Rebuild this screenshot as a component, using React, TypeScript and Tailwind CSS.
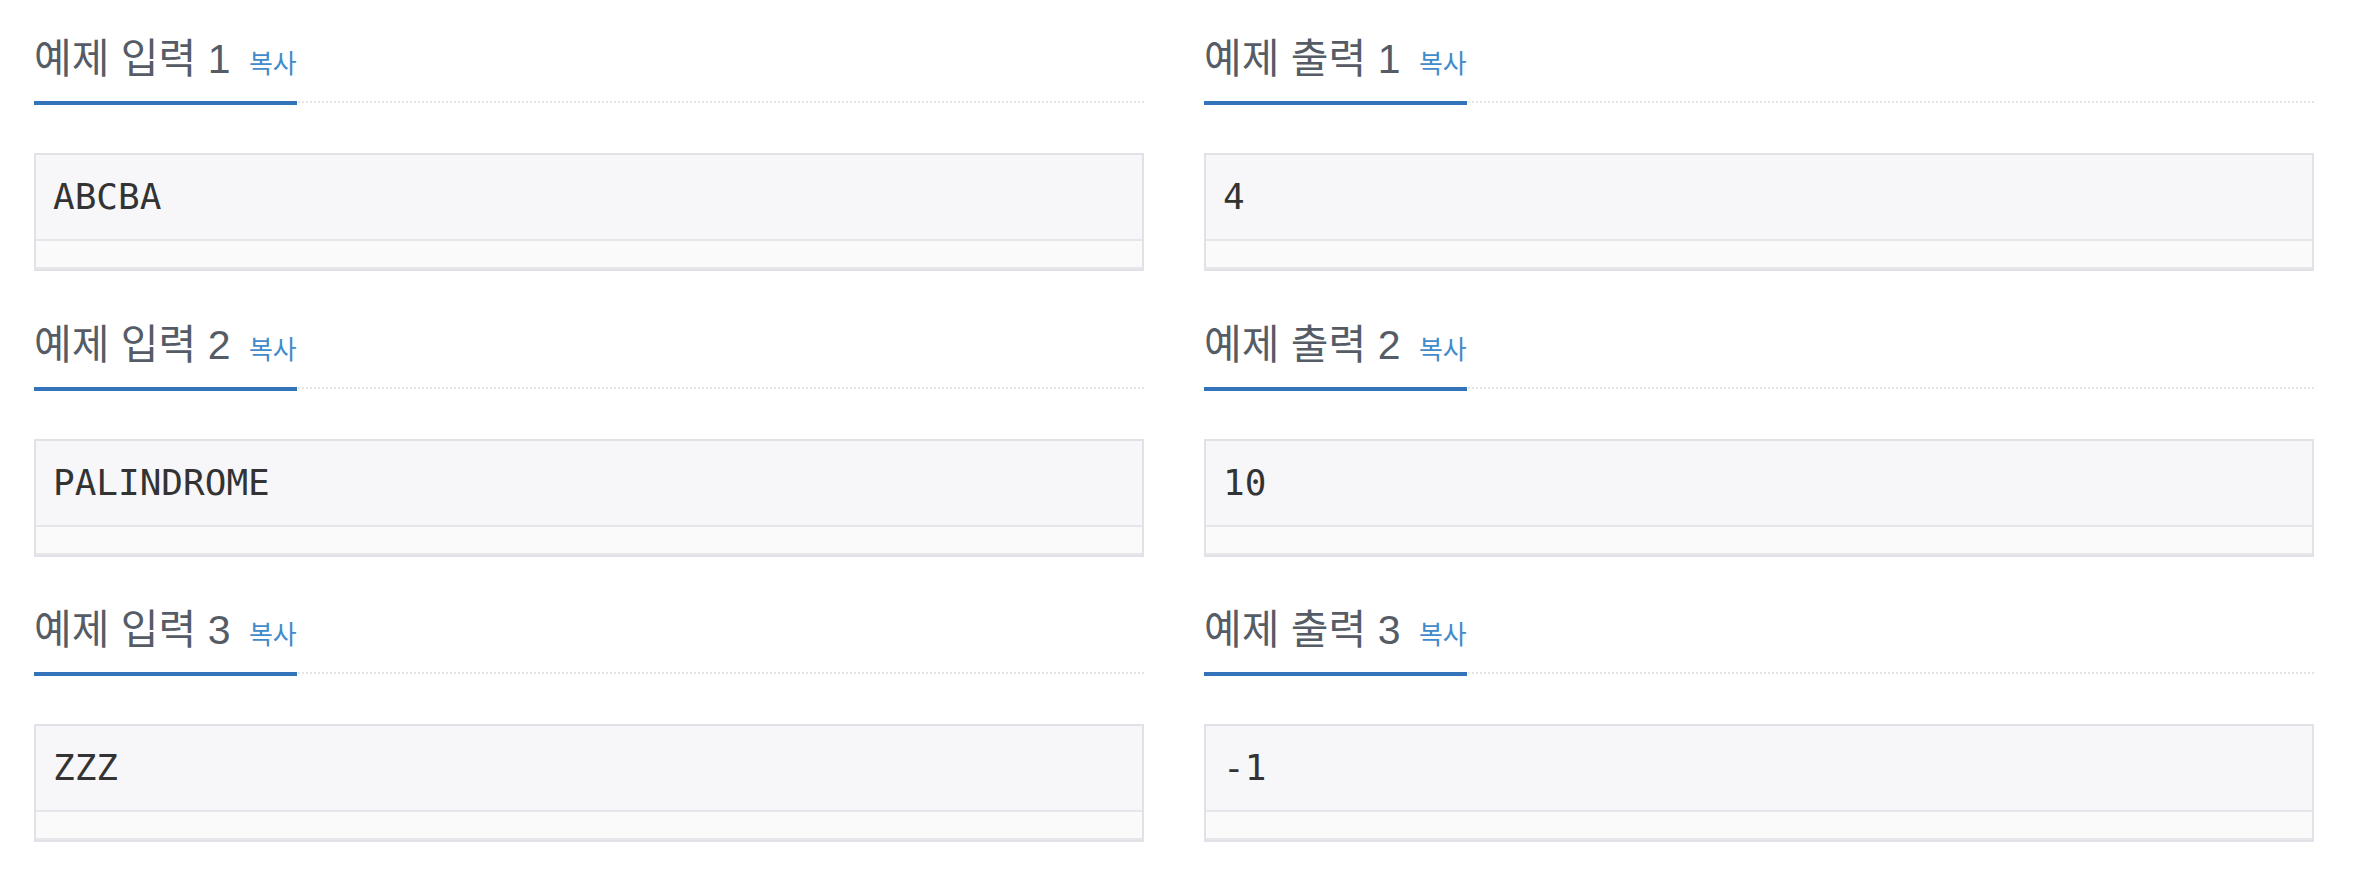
import React from "react"

const samples = [
  { n: 1, input: "ABCBA", output: "4" },
  { n: 2, input: "PALINDROME", output: "10" },
  { n: 3, input: "ZZZ", output: "-1" },
]

function SampleBlock({ title, value }: { title: string; value: string }) {
  return (
    <div>
      {/* headline */}
      <div className="border-b-2 border-dotted border-[#e4e4ea]">
        <h2 className="inline-block mb-[-4px] pb-[18px] border-b-4 border-[#3273b9] text-[41px] leading-[48px] font-normal text-[#555c66] [font-family:'Liberation_Sans','Noto_Sans_CJK_KR',sans-serif]">
          {title}{" "}
          <button type="button" className="ml-[7px] text-[26px] leading-none text-[#428bca] [font-family:'Noto_Sans_CJK_KR',sans-serif]">
            복사
          </button>
        </h2>
      </div>

      {/* sample data */}
      <div className="mt-[50px] border-2 border-[#e1e1e8] bg-[#f7f7f9]">
        <pre className="h-[84px] flex items-center pl-[17px] text-[36px] text-[#333] [font-family:'DejaVu_Sans_Mono',monospace]">
          {value}
        </pre>
        <div className="h-[30px] border-t-2 border-[#e5e5ea] bg-[#fafafa] border-b-2 border-b-[#e6e6eb]" />
      </div>
    </div>
  )
}

export default function App() {
  return (
    <div className="min-h-screen bg-white pt-[35px]">
      <div className="ml-[34px] w-[2280px] grid grid-cols-2 gap-x-[60px]">
        {samples.map((s) => (
          <React.Fragment key={s.n}>
            <div className="mb-[49.5px]">
              <SampleBlock title={`예제 입력 ${s.n}`} value={s.input} />
            </div>
            <div className="mb-[49.5px]">
              <SampleBlock title={`예제 출력 ${s.n}`} value={s.output} />
            </div>
          </React.Fragment>
        ))}
      </div>
    </div>
  )
}
